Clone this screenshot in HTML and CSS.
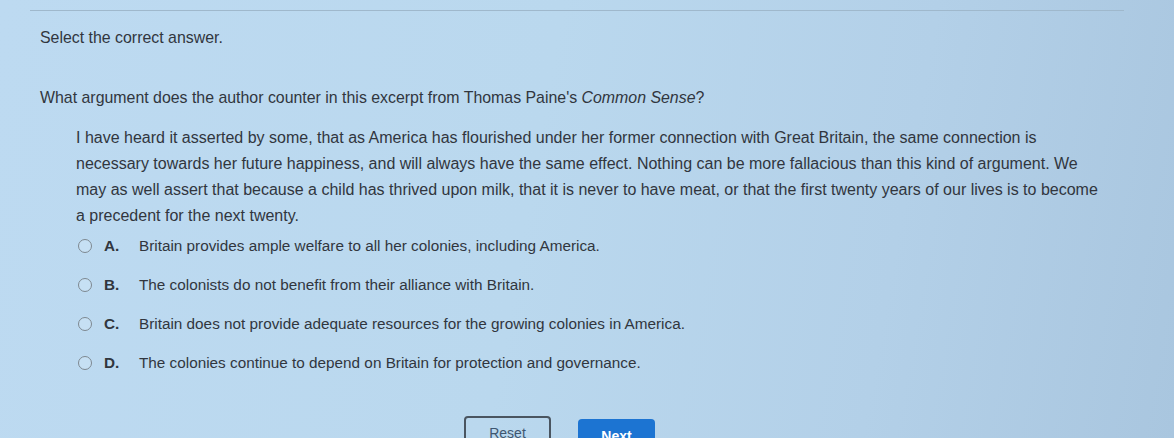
FILE: index.html
```html
<!DOCTYPE html>
<html>
<head>
<meta charset="utf-8">
<link rel="stylesheet" href="styles.css">
</head>
<body>
<div class="page">
  <div class="topline"></div>
  <p class="instr">Select the correct answer.</p>
  <p class="question">What argument does the author counter in this excerpt from Thomas Paine's <em>Common Sense</em>?</p>
  <p class="passage">I have heard it asserted by some, that as America has flourished under her former connection with Great Britain, the same connection is necessary towards her future happiness, and will always have the same effect. Nothing can be more fallacious than this kind of argument. We may as well assert that because a child has thrived upon milk, that it is never to have meat, or that the first twenty years of our lives is to become a precedent for the next twenty.</p>
  <ul class="options">
    <li class="opt"><span class="radio"></span><span class="letter">A.</span><span class="text">Britain provides ample welfare to all her colonies, including America.</span></li>
    <li class="opt"><span class="radio"></span><span class="letter">B.</span><span class="text">The colonists do not benefit from their alliance with Britain.</span></li>
    <li class="opt"><span class="radio"></span><span class="letter">C.</span><span class="text">Britain does not provide adequate resources for the growing colonies in America.</span></li>
    <li class="opt"><span class="radio"></span><span class="letter">D.</span><span class="text">The colonies continue to depend on Britain for protection and governance.</span></li>
  </ul>
  <div class="buttons">
    <button class="btn reset">Reset</button>
    <button class="btn next">Next</button>
  </div>
</div>
</body>
</html>
```
FILE: styles.css
```css
html, body {
  margin: 0;
  padding: 0;
  height: 438px;
  overflow: hidden;
}
body {
  background: linear-gradient(100deg, #bddaf1 0%, #bad8ee 45%, #b3d0e8 75%, #a9c6df 100%);
  font-family: "Liberation Sans", Arial, sans-serif;
  color: #31363e;
}
.topline {
  height: 1px;
  background: #9fb8cc;
  margin: 10px 50px 0 30px;
}
.instr {
  margin: 17px 0 0 40px;
  font-size: 15.9px;
  line-height: 20px;
}
.question {
  margin: 40px 0 0 40px;
  font-size: 15.9px;
  line-height: 20px;
}
.passage {
  margin: 17px 0 0 76px;
  width: 1025px;
  font-size: 16px;
  line-height: 26px;
}
.options {
  list-style: none;
  margin: -3px 0 0 78px;
  padding: 0;
}
.opt {
  display: flex;
  align-items: center;
  height: 39px;
  font-size: 15.3px;
}
.radio {
  width: 12px;
  height: 12px;
  border: 1.5px solid #7d8890;
  border-radius: 50%;
  background: #c6e0f4;
  margin-right: 12px;
}
.letter {
  font-weight: bold;
  width: 35px;
}
.buttons {
  display: flex;
  gap: 27px;
  margin: 34px 0 0 464px;
}
.btn {
  font-family: "Liberation Sans", Arial, sans-serif;
  font-size: 14px;
  height: 34px;
  border-radius: 4px;
  padding: 0;
}
.reset {
  width: 87px;
  background: transparent;
  border: 2px solid #4a5560;
  color: #3e5670;
}
.next {
  width: 77px;
  margin-top: 3px;
  background: #1c74d2;
  border: none;
  color: #ffffff;
  font-weight: bold;
}
```
